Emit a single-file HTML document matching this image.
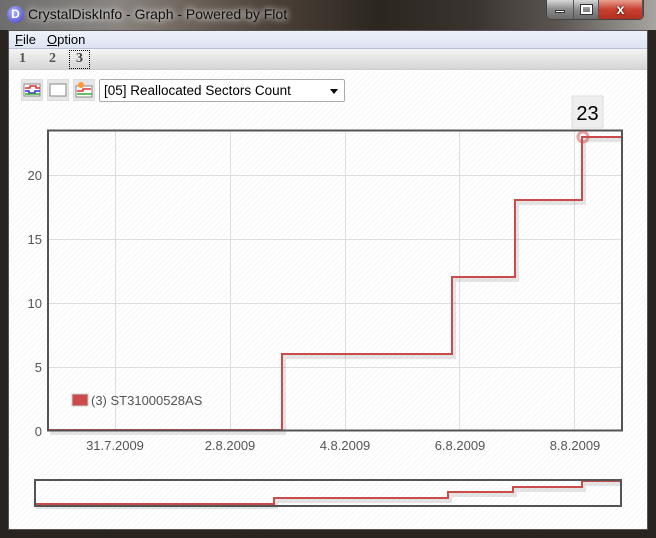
<!DOCTYPE html>
<html><head><meta charset="utf-8"><style>
*{margin:0;padding:0;box-sizing:border-box}
body{width:656px;height:538px;overflow:hidden;font-family:"Liberation Sans","DejaVu Sans",sans-serif;background:#2a2420;position:relative}
.title{position:absolute;left:0;top:0;width:656px;height:30px;background:linear-gradient(90deg,#6e6e6e 0%,#8a8580 18%,#6a6058 30%,#4a4038 42%,#2c2620 58%,#3a3430 72%,#5a5550 85%,#a8a4a0 100%)}
.title .t{position:absolute;left:28px;top:6px;color:#111;font-size:14px;text-shadow:0 0 6px #ddd,0 0 8px #ddd}
.logo{position:absolute;left:7px;top:6px;width:17px;height:17px;border-radius:50%;background:radial-gradient(circle at 40% 35%,#b0b4ff,#3a3ac0);color:#fff;font-size:12px;font-weight:bold;text-align:center;line-height:17px}
.btns{position:absolute;left:546px;top:0;height:20px;display:flex;border:1px solid #444;border-top:none;border-radius:0 0 5px 5px;overflow:hidden}
.btns div{height:19px;border-right:1px solid #555;background:linear-gradient(#d8d8d8,#8a8a8a 50%,#6a6a6a);position:relative}
.client{position:absolute;left:8px;top:30px;width:640px;height:500px;background:#fff;border:1px solid #555}
.menu{position:absolute;left:0;top:0;width:638px;height:18px;background:linear-gradient(#eef1f8,#dde3f2);border-bottom:1px solid #b8c0d8;font-size:13px}
.menu span{position:absolute;top:1px}
.tabs{position:absolute;left:0;top:18px;width:638px;height:21px;background:linear-gradient(#f4f4f4,#d6d6d6);border-bottom:1px solid #ccc;font:bold 14px "Liberation Serif",serif;color:#555}
.tabs span{position:absolute;top:2px}
.main{position:absolute;left:0;top:40px;width:638px;height:458px;background:repeating-linear-gradient(135deg,#fff 0 3px,#f6f6f6 3px 4px)}
.ib{position:absolute;top:8px;width:22px;height:22px;background:#e6e6e6;border:1px solid #ddd}
.sel{position:absolute;left:90px;top:8px;width:246px;height:23px;background:#fff;border:1px solid #aaa;border-radius:2px;font-size:13.5px;padding:3px 4px;color:#000}
</style></head><body>
<div class="title"><div class="logo">D</div><div class="t">CrystalDiskInfo - Graph - Powered by Flot</div>
<div class="btns"><div style="width:27px"><i style="position:absolute;left:8px;top:10px;width:10px;height:3px;background:#fff;border:1px solid #333"></i></div><div style="width:25px"><i style="position:absolute;left:7px;top:5px;width:11px;height:9px;border:2px solid #fff;outline:1px solid #333"></i></div><div style="width:44px;background:linear-gradient(#e8a090,#c84030 50%,#b03020);color:#fff;font-weight:bold;font-size:14px;text-align:center;line-height:18px;text-shadow:0 0 2px #000">x</div></div></div>
<div class="client">
<div class="menu"><span style="left:6px"><u>F</u>ile</span><span style="left:38px"><u>O</u>ption</span></div>
<div class="tabs"><span style="left:10px">1</span><span style="left:40px">2</span><span style="left:60px;top:1px;border:1px dotted #000;padding:0 6px;height:19px;color:#444">3</span></div>
<div class="main">
<div class="ib" style="left:12px"><svg width="20" height="20"><rect x="2" y="4" width="16" height="12" fill="#fff" stroke="#888"/><path d="M3 8h5v-2h6v2h4" stroke="#d33" fill="none" stroke-width="1.5"/><path d="M3 11h4v2h6v-2h5" stroke="#33d" fill="none" stroke-width="1.5"/><path d="M3 14h15" stroke="#3a3" stroke-width="1.5"/></svg></div>
<div class="ib" style="left:38px"><svg width="20" height="20"><rect x="2" y="4" width="16" height="12" fill="#fff" stroke="#888"/></svg></div>
<div class="ib" style="left:64px"><svg width="20" height="20"><rect x="2" y="6" width="16" height="11" fill="#fff" stroke="#888"/><circle cx="7" cy="5" r="3" fill="#f93"/><path d="M3 11h6v-2h8" stroke="#d33" fill="none" stroke-width="1.5"/><path d="M3 14h15" stroke="#3a3" stroke-width="1.5"/></svg></div>
<div class="sel">[05] Reallocated Sectors Count<span style="position:absolute;right:6px;top:9px;border:4px solid transparent;border-top:5px solid #000"></span></div>
</div>
</div>
<svg style="position:absolute;left:0;top:0" width="656" height="538" font-family="Liberation Sans, sans-serif">
<g stroke="#ddd" stroke-width="1">
<path d="M115.5 131V430M230.5 131V430M345.5 131V430M459.5 131V430M574.5 131V430"/>
<path d="M49 175.5H621M49 239.5H621M49 303.5H621M49 367.5H621"/>
</g>
<g fill="#555" font-size="13" text-anchor="end">
<text x="42" y="180">20</text><text x="42" y="244">15</text><text x="42" y="308">10</text><text x="42" y="372">5</text><text x="42" y="436">0</text></g>
<g fill="#555" font-size="13" text-anchor="middle">
<text x="115" y="450">31.7.2009</text><text x="230" y="450">2.8.2009</text><text x="345" y="450">4.8.2009</text><text x="460" y="450">6.8.2009</text><text x="575" y="450">8.8.2009</text></g>
<path d="M50 433H284V357H454V280H517V203H584V140H621" stroke="#000" stroke-opacity=".1" stroke-width="4" fill="none"/>
<path d="M48 430H282V354H452V277H515V200H582V137H622" stroke="#cb4b4b" stroke-width="2" fill="none"/>
<rect x="48" y="130.5" width="574" height="300" fill="none" stroke="#545454" stroke-width="2"/>
<circle cx="583" cy="137" r="5" fill="none" stroke="#cb4b4b" stroke-opacity=".5" stroke-width="3"/>
<rect x="572" y="96" width="31" height="32" fill="#eee" stroke="#ddd"/>
<text x="587.5" y="120" font-size="20" text-anchor="middle" fill="#000">23</text>
<rect x="72" y="394" width="16" height="12" fill="#cb4b4b" stroke="#ccc"/>
<text x="91" y="405" font-size="13" fill="#545454">(3) ST31000528AS</text>
<path d="M36 507H276V501H450V495H515V490H584V484H620" stroke="#000" stroke-opacity=".1" stroke-width="4" fill="none"/>
<path d="M36 504H274V498H448V492H513V487H582V481H620" stroke="#cb4b4b" stroke-width="2" fill="none"/>
<rect x="35" y="480" width="586" height="26" fill="none" stroke="#545454" stroke-width="2"/>
</svg>
</body></html>
